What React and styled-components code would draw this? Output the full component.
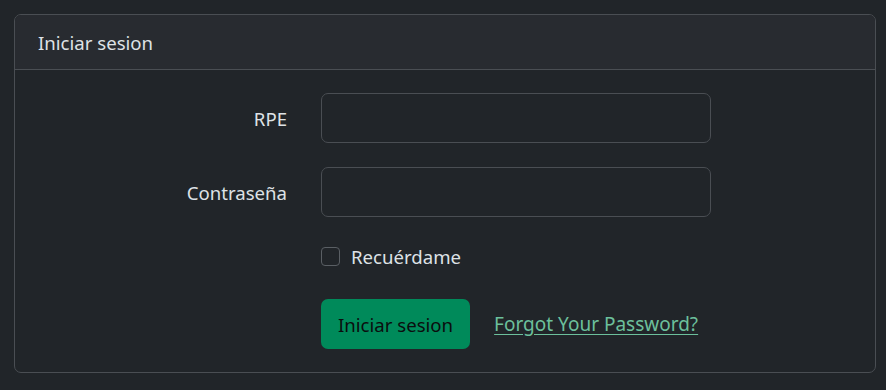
import React from "react";
import styled, { createGlobalStyle } from "styled-components";

const GlobalStyle = createGlobalStyle`
  html, body {
    margin: 0;
    padding: 0;
    background: #212529;
  }
  body {
    font-family: "Noto Sans", "Open Sans", sans-serif;
    color: #dee2e6;
  }
`;

const Page = styled.div`
  padding: 14px 10px 17px 14px;
`;

const Card = styled.div`
  border: 1px solid #4a4e53;
  border-radius: 7px;
  background: #212529;
  overflow: hidden;
`;

const CardHeader = styled.div`
  height: 54px;
  display: flex;
  align-items: center;
  padding: 0 23px;
  background: #282b30;
  border-bottom: 1px solid #4a4e53;
  font-size: 18.6px;
`;

const CardBody = styled.div`
  padding: 23px 0 23px;
  display: grid;
  grid-template-columns: 272px 390px;
  column-gap: 34px;
  row-gap: 24px;
  align-items: center;
`;

const Label = styled.label`
  text-align: right;
  font-size: 18.6px;
`;

const Input = styled.input`
  box-sizing: border-box;
  width: 100%;
  height: 50px;
  background: #212529;
  border: 1px solid #4a4e53;
  border-radius: 7px;
  color: #dee2e6;
  font-size: 18px;
  padding: 0 15px;
  outline: none;
`;

const CheckRow = styled.label`
  grid-column: 2;
  display: flex;
  align-items: center;
  gap: 11px;
  font-size: 18.6px;
  line-height: 27px;
  margin-top: 2px;
`;

const Box = styled.span`
  box-sizing: border-box;
  width: 19px;
  height: 19px;
  border: 1px solid #5a5f64;
  border-radius: 4px;
  background: #212529;
`;

const Actions = styled.div`
  grid-column: 2;
  display: flex;
  align-items: center;
  gap: 24px;
  margin-top: 5px;
`;

const Button = styled.button`
  height: 50px;
  padding: 0 17px;
  border: none;
  border-radius: 7px;
  background: #008a5a;
  color: #0b0d0e;
  font-family: inherit;
  font-size: 18.6px;
`;

const Link = styled.a`
  color: #6cc09c;
  font-size: 19px;
  text-decoration: underline;
  text-underline-offset: 3px;
`;

export default function App() {
  return (
    <>
      <GlobalStyle />
      <Page>
        <Card>
          <CardHeader>Iniciar sesion</CardHeader>
          <CardBody>
            <Label>RPE</Label>
            <Input type="text" />
            <Label>Contraseña</Label>
            <Input type="password" />
            <CheckRow>
              <Box />
              Recuérdame
            </CheckRow>
            <Actions>
              <Button>Iniciar sesion</Button>
              <Link href="#">Forgot Your Password?</Link>
            </Actions>
          </CardBody>
        </Card>
      </Page>
    </>
  );
}
